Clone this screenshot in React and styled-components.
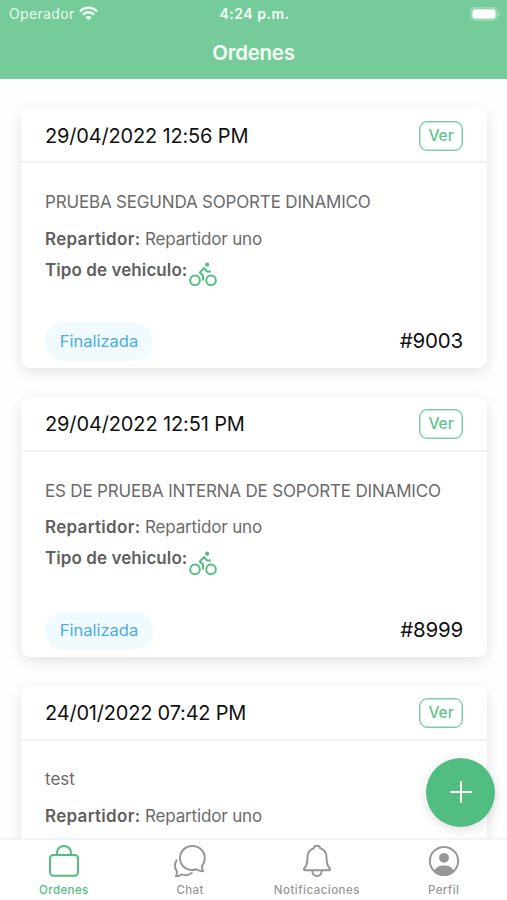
import React from "react";
import styled, { createGlobalStyle, css } from "styled-components";

const GREEN = "#52bd81";

const GlobalStyle = createGlobalStyle`
  * { box-sizing: border-box; }
  body {
    margin: 0;
    background: #fff;
    font-family: Inter, "Liberation Sans", sans-serif;
  }
`;

const Screen = styled.div`
  position: relative;
  display: flex;
  flex-direction: column;
  width: 507px;
  height: 900px;
  overflow: hidden;
  background: #fefefe;
`;

const Header = styled.header`
  flex: none;
  height: 79px;
  background: #76cb9a;
  color: #f4fff7;
`;

const StatusBar = styled.div`
  display: grid;
  grid-template-columns: 1fr auto 1fr;
  align-items: center;
  height: 27px;
  padding: 0 7px 0 9px;
  font-size: 14px;
  line-height: 27px;
`;

const Carrier = styled.div`
  display: flex;
  align-items: center;
  gap: 4px;
  letter-spacing: 0.35px;
  color: #e6fbed;
`;

const Clock = styled.div`
  font-weight: 600;
  letter-spacing: 0.5px;
`;

const Battery = styled.svg`
  justify-self: end;
`;

const Title = styled.h1`
  margin: 0;
  height: 50px;
  font-size: 20.5px;
  font-weight: 600;
  line-height: 51px;
  letter-spacing: -0.25px;
  text-align: center;
`;

const OrderList = styled.main`
  flex: 1;
  min-height: 0;
  overflow: hidden;
  display: flex;
  flex-direction: column;
  gap: 29px;
  padding: 29.4px 20px 0 21px;
`;

const Card = styled.article`
  flex: none;
  display: flex;
  flex-direction: column;
  height: 259.7px;
  border-radius: 9px;
  background: #fff;
  box-shadow: 0 4px 14px rgba(0, 0, 0, 0.11);
`;

const CardHeader = styled.div`
  display: flex;
  align-items: center;
  justify-content: space-between;
  height: 55px;
  padding: 1.4px 24px 0;
  border-bottom: 2px solid #f1f1f1;
`;

const OrderDate = styled.div`
  font-size: 20px;
  line-height: 30px;
  letter-spacing: ${(p) => p.$tracking}px;
  color: #111;
  white-space: nowrap;
`;

const ViewButton = styled.button`
  width: 44px;
  height: 30px;
  padding: 0;
  border: 1.5px solid #7dcf9f;
  border-radius: 8px;
  background: #fff;
  box-shadow: inset 0 0 0 0.5px #7dcf9f;
  color: #62c38d;
  font: 500 15.5px/26px Inter, sans-serif;
`;

const CardBody = styled.div`
  flex: 1;
  padding: 25.6px 24px 0;
  color: #6b6b6b;
`;

const Description = styled.p`
  margin: 0;
  height: 36.8px;
  font-size: 17px;
  line-height: 27px;
  letter-spacing: ${(p) => p.$tracking}px;
  white-space: nowrap;
`;

const Detail = styled.div`
  display: flex;
  height: 31px;
  font-size: 17px;
  line-height: 27px;
  letter-spacing: -0.15px;
  white-space: pre;
`;

const Label = styled.strong`
  font-weight: 600;
  letter-spacing: ${(p) => p.$tracking}px;
  color: #5f5f5f;
`;

const VehicleIcon = styled.svg`
  margin: 5.4px 0 0 2px;
`;

const CardFooter = styled.div`
  display: flex;
  align-items: center;
  justify-content: space-between;
  padding: 0 24px 7px;
`;

const StatusPill = styled.span`
  width: 108px;
  height: 39px;
  border-radius: 20px;
  background: #f0faff;
  color: #4baedb;
  font-size: 16.5px;
  line-height: 39px;
  text-align: center;
`;

const OrderNumber = styled.span`
  color: #111;
  font-size: 20.5px;
  line-height: 24px;
  padding-bottom: 1px;
  letter-spacing: -0.2px;
`;

const AddButton = styled.button`
  position: absolute;
  right: 12px;
  top: 757.5px;
  display: grid;
  place-items: center;
  width: 69px;
  height: 69px;
  padding: 0;
  border: 0;
  border-radius: 50%;
  background: ${GREEN};
  box-shadow: 0 3px 12px rgba(0, 0, 0, 0.13);
`;

const TabBar = styled.nav`
  position: relative;
  flex: none;
  display: grid;
  grid-template-columns: repeat(4, 1fr);
  height: 62px;
  border-top: 2px solid #f3f3f3;
  background: #fff;
`;

const Tab = styled.div`
  display: flex;
  flex-direction: column;
  align-items: center;
  padding-top: 4px;
  color: #979797;
  font-size: 11.5px;
  font-weight: 500;
  line-height: 16px;
  letter-spacing: ${(p) => p.$tracking || 0.4}px;
  ${(p) => p.$active && css`
    padding-left: 1px;
    color: ${GREEN};
  `}
`;

const TabGlyph = styled.svg`
  flex: none;
  margin-bottom: 4px;
  fill: none;
  stroke: currentColor;
  stroke-width: 2;
  stroke-linecap: round;
  stroke-linejoin: round;
`;

const WifiIcon = () => (
  <svg width="19" height="15" viewBox="0 0 19 15" fill="none" stroke="#f4fff7" strokeWidth="2.5">
    <path d="M1 5.3C6 .4 13 .4 18 5.3M4 8.7c3.2-3.2 7.8-3.2 11 0" />
    <path d="M6.5 11.2c1.8-1.7 4.2-1.7 6 0l-3 3z" fill="#f4fff7" stroke="none" />
  </svg>
);

const BicycleIcon = () => (
  <VehicleIcon width="28" height="25" viewBox="0 0 28 25" fill="none" stroke={GREEN} strokeWidth="2">
    <circle cx="6" cy="18.4" r="4.8" />
    <circle cx="22" cy="18.4" r="4.8" />
    <circle cx="18.2" cy="2.7" r="2.1" fill={GREEN} stroke="none" />
    <path d="M14 18.5v-5l-3.2-3 4.3-4.4 2.7 3.3h4" strokeLinejoin="round" />
  </VehicleIcon>
);

const icons = {
  bag: (
    <>
      <rect x="3" y="11" width="28" height="20.8" rx="3.2" />
      <path d="M10 11V9a7 7 0 0 1 14 0v2" />
    </>
  ),
  chat: (
    <g transform="translate(-1 0)">
      <path d="M31.2 27.2c-2.700.2-5-.6-6.800-1.900-8.300 2.800-16.400-2.800-16.400-11.300C8 7.200 13.400 2 20.300 2c7.100 0 12.500 5.300 12.500 12 0 3.200-1 5.700-2.800 7.900 0 2 .4 3.900 1.200 5.300z" />
      <path d="M4.600 16.200c-2.200 3.600-2 7.900.2 10.800.2 2.200-.1 3.900-.8 5.300 2.300.1 4.200-.700 5.600-1.900 3.700 1.300 7.400.8 10.100-1.400" />
    </g>
  ),
  bell: (
    <>
      <path d="M17 1.800c1.800 0 2.900 1 3.200 2.500 4.300 1.300 6.400 5 6.400 9.700 0 6.100.7 8.100 3.100 10.200.9.800.4 2-.9 2H5.200c-1.300 0-1.800-1.200-.9-2C6.700 22.100 7.400 20.100 7.400 14c0-4.700 2.100-8.400 6.400-9.700.3-1.500 1.400-2.500 3.200-2.500z" />
      <path d="M12.300 27c.4 3.400 2.200 5 4.700 5s4.300-1.600 4.700-5" />
    </>
  ),
  profile: (
    <>
      <circle cx="17" cy="17" r="14.100" />
      <circle cx="17" cy="13.800" r="4.900" fill="currentColor" stroke="none" />
      <path d="M7.300 26.400c2.100-3.700 5.500-5 9.700-5s7.600 1.300 9.700 5C24.200 29.400 21 31 17 31s-7.200-1.600-9.700-4.600z" fill="currentColor" stroke="none" />
    </>
  ),
};

const TabIcon = ({ name }) => (
  <TabGlyph width="34" height="34" viewBox="0 0 34 34">{icons[name]}</TabGlyph>
);

const OrderCard = ({ order }) => (
  <Card>
    <CardHeader>
      <OrderDate $tracking={order.dateTracking}>{order.date}</OrderDate>
      <ViewButton>Ver</ViewButton>
    </CardHeader>
    <CardBody>
      <Description $tracking={order.tracking}>{order.description}</Description>
      <Detail><Label $tracking={0.3}>Repartidor: </Label><span>Repartidor uno</span></Detail>
      <Detail><Label $tracking={0.08}>Tipo de vehiculo:</Label><BicycleIcon /></Detail>
    </CardBody>
    <CardFooter>
      <StatusPill>Finalizada</StatusPill>
      <OrderNumber>{order.number}</OrderNumber>
    </CardFooter>
  </Card>
);

const orders = [
  { date: "29/04/2022 12:56 PM", description: "PRUEBA SEGUNDA SOPORTE DINAMICO", number: "#9003", tracking: -0.18, dateTracking: -0.17 },
  { date: "29/04/2022 12:51 PM", description: "ES DE PRUEBA INTERNA DE SOPORTE DINAMICO", number: "#8999", tracking: -0.18, dateTracking: -0.13 },
  { date: "24/01/2022 07:42 PM", description: "test", number: "#8998", tracking: 0, dateTracking: -0.2 },
];

export default function App() {
  return (
    <>
      <GlobalStyle />
      <Screen>
        <Header>
          <StatusBar>
            <Carrier>Operador <WifiIcon /></Carrier>
            <Clock>4:24 p.m.</Clock>
            <Battery width="30" height="14" viewBox="0 0 30 14">
              <rect x=".7" y=".7" width="26.600" height="12.600" rx="4" fill="#98d8b2" stroke="#98d8b2" strokeWidth="1.300" />
              <rect x="2.500" y="2.500" width="23" height="9" rx="2.300" fill="#fff" />
              <path d="M28.500 5v4q1.500-.5 1.500-2t-1.500-2" fill="#b2e4c5" />
            </Battery>
          </StatusBar>
          <Title>Ordenes</Title>
        </Header>
        <OrderList>
          {orders.map((order) => <OrderCard key={order.number} order={order} />)}
        </OrderList>
        <TabBar>
          <Tab $active><TabIcon name="bag" />Ordenes</Tab>
          <Tab><TabIcon name="chat" />Chat</Tab>
          <Tab $tracking={0.48}><TabIcon name="bell" />Notificaciones</Tab>
          <Tab><TabIcon name="profile" />Perfil</Tab>
        </TabBar>
        <AddButton aria-label="Agregar orden">
          <svg width="22" height="22" viewBox="0 0 22 22" stroke="#fff" strokeWidth="2" strokeLinecap="round">
            <path d="M11 1v20M1 11h20" />
          </svg>
        </AddButton>
      </Screen>
    </>
  );
}
